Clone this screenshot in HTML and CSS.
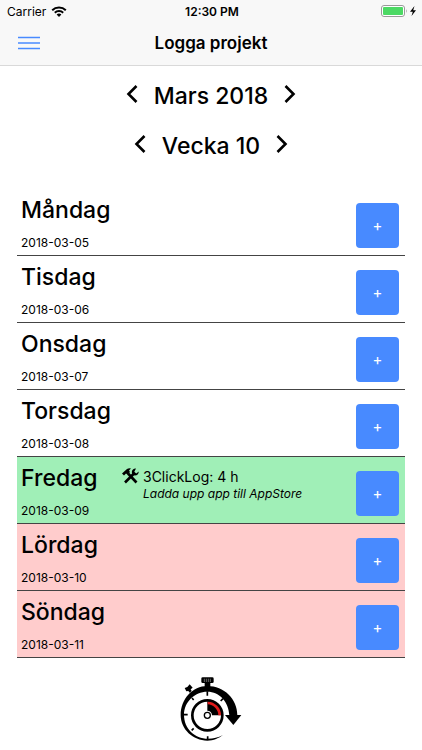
FILE: index.html
```html
<!DOCTYPE html>
<html lang="sv">
<head>
  <meta charset="UTF-8">
  <meta name="viewport" content="width=device-width, initial-scale=1">
  <title>Logga projekt</title>
  <link rel="stylesheet" href="styles.css">
</head>
<body>
  <header class="header">
    <div class="status">
      <div class="carrier">
        <span>Carrier</span>
        <svg width="16" height="11" viewBox="0 0 16 11">
          <path d="M1.2 4.2a9.8 9.8 0 0 1 13.6 0M3.8 6.8a6.1 6.1 0 0 1 8.4 0" fill="none" stroke="#000" stroke-width="2"/>
          <path d="M8 11L5.6 8.6a3.4 3.4 0 0 1 4.8 0z"/>
        </svg>
      </div>
      <span class="clock">12:30 PM</span>
      <div class="battery">
        <svg width="36" height="12" viewBox="0 0 36 12">
          <rect x="0.5" y="0.5" width="23" height="11" rx="2.5" fill="#fff" stroke="#9a9a9a"/>
          <rect x="2" y="2" width="20" height="8" rx="1" fill="#4cd964"/>
          <path d="M25 4q1.500 2 0 4z" fill="#9a9a9a"/>
          <path d="M33.500 1L29 6.800h2.800L30.500 11 35 5.200h-2.800z"/>
        </svg>
      </div>
    </div>
    <div class="toolbar">
      <button class="menu-btn" aria-label="Meny">
        <svg width="22" height="14" viewBox="0 0 22 14">
          <path d="M0 1.500h22M0 7h22M0 12.500h22" stroke="#488aff" stroke-width="1.600"/>
        </svg>
      </button>
      <h1>Logga projekt</h1>
    </div>
  </header>

  <main>
    <div class="picker">
      <button class="arrow" aria-label="Föregående månad">
        <svg width="12" height="20" viewBox="0 0 12 20"><path d="M10.500 2L2.500 10l8 8"/></svg>
      </button>
      <h2>Mars 2018</h2>
      <button class="arrow" aria-label="Nästa månad">
        <svg width="12" height="20" viewBox="0 0 12 20"><path d="M1.500 2l8 8-8 8"/></svg>
      </button>
    </div>
    <div class="picker">
      <button class="arrow" aria-label="Föregående vecka">
        <svg width="12" height="20" viewBox="0 0 12 20"><path d="M10.500 2L2.500 10l8 8"/></svg>
      </button>
      <h2>Vecka 10</h2>
      <button class="arrow" aria-label="Nästa vecka">
        <svg width="12" height="20" viewBox="0 0 12 20"><path d="M1.500 2l8 8-8 8"/></svg>
      </button>
    </div>

    <ul class="days">
      <li class="day">
        <div class="name"><h3>Måndag</h3><time>2018-03-05</time></div>
        <button class="add" aria-label="Lägg till måndag">+</button>
      </li>
      <li class="day">
        <div class="name"><h3>Tisdag</h3><time>2018-03-06</time></div>
        <button class="add" aria-label="Lägg till tisdag">+</button>
      </li>
      <li class="day">
        <div class="name"><h3>Onsdag</h3><time>2018-03-07</time></div>
        <button class="add" aria-label="Lägg till onsdag">+</button>
      </li>
      <li class="day">
        <div class="name"><h3>Torsdag</h3><time>2018-03-08</time></div>
        <button class="add" aria-label="Lägg till torsdag">+</button>
      </li>
      <li class="day logged">
        <div class="name"><h3>Fredag</h3><time>2018-03-09</time></div>
        <div class="entry">
          <!-- hammer and wrench -->
          <svg width="17" height="16" viewBox="0 0 17 16">
            <path d="M6 5.500L14.500 14.500" stroke="#000" stroke-width="2.600" fill="none"/>
            <path d="M0 5.500L5 1q2-1.200 4-.5L7 2.500l1 1.500-2.500 2.500L4 5.500 2 7.500z"/>
            <path d="M3 14.500L12 5.500" stroke="#000" stroke-width="2.600" fill="none"/>
            <path d="M14 .5q-3.800-.2-4.200 3.500.2 3 3 3.500Q16.500 7.500 16.800 3.500l-2.600 2-1.900-1.800z"/>
          </svg>
          <div>
            <p class="project">3ClickLog: 4 h</p>
            <p class="note">Ladda upp app till AppStore</p>
          </div>
        </div>
        <button class="add" aria-label="Lägg till fredag">+</button>
      </li>
      <li class="day weekend">
        <div class="name"><h3>Lördag</h3><time>2018-03-10</time></div>
        <button class="add" aria-label="Lägg till lördag">+</button>
      </li>
      <li class="day weekend">
        <div class="name"><h3>Söndag</h3><time>2018-03-11</time></div>
        <button class="add" aria-label="Lägg till söndag">+</button>
      </li>
    </ul>
  </main>

  <footer class="logo">
    <svg width="62" height="66" viewBox="46 30 186 198">
      <!-- crown and side button -->
      <rect x="110" y="34" width="37" height="17" rx="4"/>
      <path d="M119 38v10M125 38v10M131 38v10M137 38v10" stroke="#999" stroke-width="2"/>
      <path d="M120 50h17v14h-17zM60 66l8-3 7-8 9 10-6 5 3 5-6 5-4-5-6 1z"/>
      <!-- swoosh and arrow head -->
      <path d="M218 148C218 98 178 60 128 60 84 60 48 98 48 148c0 42 37 76 80 76 19 0 35-8 47-17-15 8-28 11-45 11-40 0-72-30-72-72 0-38 32-69 70-69 37 0 64 31 66 71z"/>
      <path d="M181 147h49l-24 30z"/>
      <path d="M128 76v13M58 146h11M129 211v9M82 96l5 6M175 98l-7 7M81 193l6-6" stroke="#000" stroke-width="5"/>
      <!-- dial -->
      <circle cx="128" cy="148" r="45" fill="#fff" stroke="#000" stroke-width="8"/>
      <path d="M128 148v-43a43 43 0 0 1 43 43z"/>
      <path d="M129 111a37 37 0 0 1 36 37" fill="none" stroke="#e01b1b" stroke-width="8"/>
      <circle cx="128" cy="148" r="14" fill="#fff"/>
      <circle cx="128" cy="148" r="9" fill="#fff" stroke="#000" stroke-width="4"/>
    </svg>
  </footer>
</body>
</html>
```

FILE: styles.css
```css
* {
  margin: 0;
  padding: 0;
  box-sizing: border-box;
}

body {
  font-family: Inter, "Liberation Sans", sans-serif;
  background: #fff;
  color: #000;
}

button {
  border: none;
  background: none;
  font-family: inherit;
  cursor: pointer;
}

svg {
  display: block;
}

.header {
  background: #f8f8f8;
  border-bottom: 1px solid #d9d9d9;
}

.status {
  display: grid;
  grid-template-columns: 1fr auto 1fr;
  align-items: center;
  height: 22px;
  padding: 0 5px 0 7px;
  font-size: 12px;
}

.carrier {
  display: flex;
  align-items: center;
  gap: 5px;
}

.clock {
  font-weight: 600;
}

.battery {
  justify-self: end;
}

.toolbar {
  display: grid;
  grid-template-columns: 1fr auto 1fr;
  align-items: center;
  height: 43px;
  padding: 0 18px 2px;
}

.menu-btn {
  justify-self: start;
}

h1 {
  font-size: 17px;
  font-weight: 600;
}

.picker {
  display: flex;
  justify-content: center;
  align-items: center;
  gap: 16px;
  height: 50px;
}

.picker:first-child {
  margin-top: 5px;
}

h2 {
  font-size: 23px;
  font-weight: 500;
}

.arrow {
  padding-bottom: 5px;
}

.arrow path {
  fill: none;
  stroke: #000;
  stroke-width: 2.6;
}

.days {
  list-style: none;
  margin: 18px 17px 0;
}

.day {
  display: flex;
  height: 67px;
  padding: 4px 6px 0 4px;
  border-bottom: 1px solid #444;
}

.logged {
  background: #a0efb7;
}

.weekend {
  background: #ffcccc;
}

.name {
  width: 101px;
}

h3 {
  font-size: 23px;
  font-weight: 500;
  line-height: 35px;
}

time {
  display: block;
  font-size: 12px;
  line-height: 30px;
}

.entry {
  display: flex;
  gap: 4px;
  padding-top: 7px;
}

.project {
  font-size: 14px;
  line-height: 18px;
}

.note {
  font-size: 12px;
  font-style: italic;
  line-height: 16px;
}

.add {
  width: 43px;
  height: 45px;
  margin: 10px 0 0 auto;
  border-radius: 4px;
  background: #488aff;
  color: #fff;
  font-size: 15px;
}

.logo {
  display: flex;
  justify-content: center;
  padding-top: 18px;
}
```
